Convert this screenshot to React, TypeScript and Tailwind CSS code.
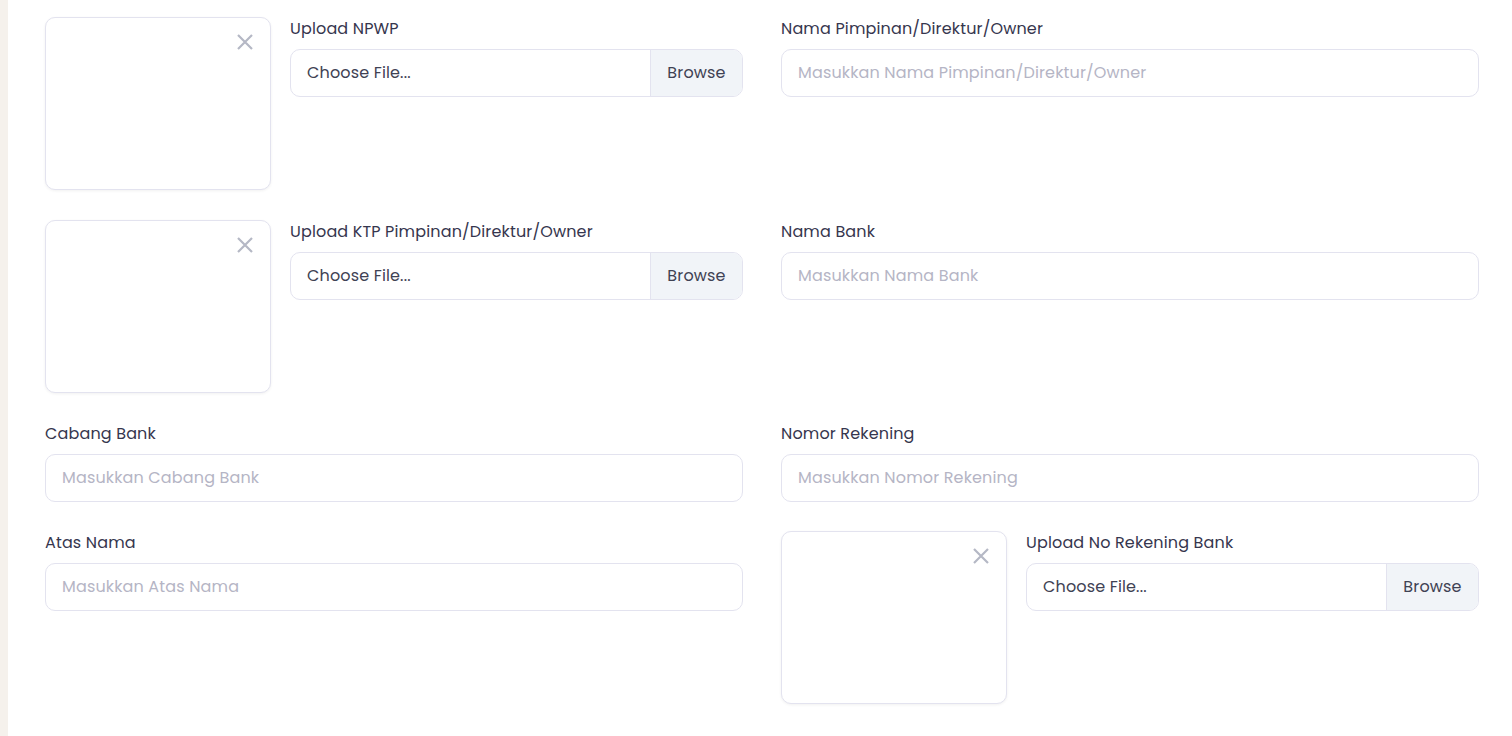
import React from "react";

const font = { fontFamily: "Poppins, Inter, 'Noto Sans', sans-serif" };

function XIcon() {
  return (
    <svg width="16" height="16" viewBox="0 0 16 16" fill="none" stroke="#b5b8c5" strokeWidth="2.2">
      <path d="M1 1 L15 15 M15 1 L1 15" />
    </svg>
  );
}

function Preview() {
  return (
    <div className="relative w-[226px] h-[173px] shrink-0 rounded-[10px] border border-[#e3e3ef] bg-white shadow-[0_1px_3px_rgba(0,0,0,0.06)]">
      <div className="absolute right-[17px] top-[16px] flex">
        <XIcon />
      </div>
    </div>
  );
}

function Label({ children }: { children: React.ReactNode }) {
  return <div className="h-[22px] mb-[10px] text-[16px] leading-[24px] text-[#36364e] tracking-[0.15px] whitespace-nowrap">{children}</div>;
}

function FileInput() {
  return (
    <div className="flex h-[48px] rounded-[10px] border border-[#e3e3ef] overflow-hidden bg-white">
      <div className="flex-1 flex items-center pl-[16px] text-[16px] text-[#3f4254] tracking-[0.15px]">Choose File...</div>
      <div className="w-[92px] flex items-center justify-center bg-[#f1f4f8] border-l border-[#e3e3ef] text-[16px] text-[#3f4254] tracking-[0.15px]">Browse</div>
    </div>
  );
}

function TextInput({ placeholder }: { placeholder: string }) {
  return (
    <div className="flex items-center h-[48px] rounded-[10px] border border-[#e3e3ef] bg-white pl-[16px] text-[16px] text-[#b5b5c5] tracking-[0.15px] whitespace-nowrap">
      {placeholder}
    </div>
  );
}

function UploadRow({ label }: { label: string }) {
  return (
    <div className="flex gap-[19px]">
      <Preview />
      <div className="flex-1">
        <Label>{label}</Label>
        <FileInput />
      </div>
    </div>
  );
}

function Field({ label, placeholder }: { label: string; placeholder: string }) {
  return (
    <div>
      <Label>{label}</Label>
      <TextInput placeholder={placeholder} />
    </div>
  );
}

export default function App() {
  return (
    <div className="flex w-[1512px] h-[736px] bg-white overflow-hidden" style={font}>
      <div className="w-[8px] shrink-0 bg-[#f5f1ec]" />
      <div className="flex-1 pl-[37px] pr-[33px] pt-[17px] flex flex-col">
        <div className="grid grid-cols-2 gap-x-[38px] items-start mb-[30px]">
          <UploadRow label="Upload NPWP" />
          <Field label="Nama Pimpinan/Direktur/Owner" placeholder="Masukkan Nama Pimpinan/Direktur/Owner" />
        </div>
        <div className="grid grid-cols-2 gap-x-[38px] items-start mb-[29px]">
          <UploadRow label="Upload KTP Pimpinan/Direktur/Owner" />
          <Field label="Nama Bank" placeholder="Masukkan Nama Bank" />
        </div>
        <div className="grid grid-cols-2 gap-x-[38px] items-start mb-[29px]">
          <Field label="Cabang Bank" placeholder="Masukkan Cabang Bank" />
          <Field label="Nomor Rekening" placeholder="Masukkan Nomor Rekening" />
        </div>
        <div className="grid grid-cols-2 gap-x-[38px] items-start">
          <Field label="Atas Nama" placeholder="Masukkan Atas Nama" />
          <UploadRow label="Upload No Rekening Bank" />
        </div>
      </div>
    </div>
  );
}
